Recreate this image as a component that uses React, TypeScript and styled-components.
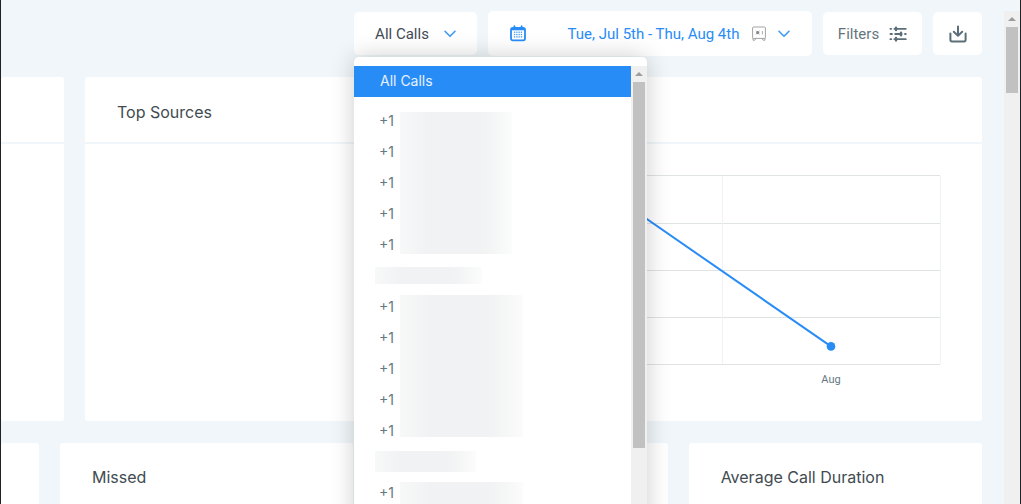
import React from "react";
import styled, { createGlobalStyle } from "styled-components";

const GlobalStyle = createGlobalStyle`
  *, *::before, *::after { box-sizing: border-box; }
  body { margin: 0; background: #f0f6f9; }
  button { font: inherit; cursor: pointer; }
`;

const Page = styled.div`
  display: flex;
  height: 100vh;
  overflow: hidden;
  border-left: 1px solid #1f2326;
  border-right: 1px solid #1f2326;
  background: #f0f6f9;
  font-family: Roboto, "Liberation Sans", sans-serif;
  color: #414b50;
`;

const Content = styled.main`
  flex: 1;
  min-width: 0;
  padding-right: 22px;
`;

const Toolbar = styled.header`
  display: flex;
  justify-content: flex-end;
  align-items: center;
  gap: 11px;
  padding: 11px 0 21px;
`;

const SelectWrap = styled.div`
  position: relative;
`;

const ToolButton = styled.button<{ $width: number; $gap?: number; $tall?: boolean; $color?: string }>`
  display: flex;
  align-items: center;
  justify-content: center;
  gap: ${(p) => p.$gap ?? 12}px;
  width: ${(p) => p.$width}px;
  height: ${(p) => (p.$tall ? 45 : 43)}px;
  padding: 0;
  border: 0;
  border-radius: 5px;
  background: #fff;
  color: ${(p) => p.$color ?? "#66757d"};
  font-size: 15px;
  line-height: 20px;
  white-space: nowrap;
`;

const DateText = styled.span`
  margin: 0 1px 0 30px;
`;

const Menu = styled.div`
  position: absolute;
  top: 45px;
  left: 0;
  z-index: 2;
  width: 293px;
  padding-top: 9px;
  border-radius: 5px;
  background: #fff;
  box-shadow: 0 0 24px rgba(0, 0, 0, 0.2);
`;

const MenuBody = styled.div`
  display: flex;
  min-height: 460px;
`;

const MenuList = styled.div`
  flex: 1;
  font-family: Inter, Roboto, sans-serif;
  font-size: 14px;
  line-height: 31px;
  color: #66777f;
`;

const SelectedOption = styled.div`
  height: 31px;
  padding-left: 26px;
  margin-bottom: 8px;
  background: #288cf7;
  color: #e6f2ff;
  line-height: 30px;
`;

const NumberGroup = styled.div`
  display: flex;
  gap: 6px;
  padding-left: 25px;
`;

const Prefixes = styled.div`
  width: 15px;
`;

const Redacted = styled.div<{ $width: number; $height: number }>`
  width: ${(p) => p.$width}px;
  height: ${(p) => p.$height}px;
  background: linear-gradient(90deg, #f7f8f8, #f1f2f3 25%, #f0f2f3 70%, #f5f6f6 85%, #fbfcfb);
`;

const NumberMask = styled(Redacted)<{ $top: number }>`
  margin-top: ${(p) => p.$top}px;
`;

const GroupTitle = styled.div`
  display: flex;
  align-items: center;
  height: 31px;
  padding-left: 21px;
`;

const ScrollTrack = styled.div<{ $width: number }>`
  flex: none;
  width: ${(p) => p.$width}px;
  padding: 0 2px;
  background: #f0f0f0;
`;

const ScrollArrow = styled.div`
  display: flex;
  justify-content: center;
  align-items: center;
  height: 16px;

  &::before {
    content: "";
    border: 4px solid transparent;
    border-top-width: 0;
    border-bottom-color: #9c9c9c;
  }
`;

const ScrollThumb = styled.div<{ $height: number }>`
  height: ${(p) => p.$height}px;
  background: #c1c1c1;
`;

const PageScroll = styled(ScrollTrack)`
  margin-top: 11px;
`;

const Row = styled.section<{ $first: string; $count: number }>`
  display: grid;
  grid-template-columns: ${(p) => p.$first} repeat(${(p) => p.$count}, 1fr);
  gap: 21px;
  margin-bottom: 22px;
`;

const Card = styled.article<{ $height: number }>`
  height: ${(p) => p.$height}px;
  border-radius: 3px;
  background: #fff;
`;

const CardHeader = styled.h2<{ $ruled?: boolean }>`
  height: 67px;
  margin: 0;
  padding: ${(p) => (p.$ruled ? 24 : 23)}px 32px 0;
  border-bottom: ${(p) => (p.$ruled ? "2px solid #f0f6f9" : "0")};
  font-family: Inter, Roboto, sans-serif;
  font-size: 16px;
  font-weight: 400;
  line-height: 22px;
`;

const ChartWrap = styled.div`
  display: flex;
  justify-content: flex-end;
`;

const Chevron = () => (
  <svg width="12" height="8" viewBox="0 0 12 8" fill="none" stroke="#3d9afa" strokeWidth="1.6" strokeLinecap="round" strokeLinejoin="round" aria-hidden="true">
    <path d="M1 1.3 6 6.3 11 1.3" />
  </svg>
);

const CalendarIcon = () => (
  <svg width="16" height="17" viewBox="0 0 16 17" fill="none" aria-hidden="true">
    <rect x="1" y="3" width="14" height="12.4" rx="1.8" stroke="#288cf7" strokeWidth="1.8" />
    <path d="M1 4.4h14" stroke="#288cf7" strokeWidth="1.8" />
    <path d="M4.4 1.2v3M11.6 1.2v3" stroke="#288cf7" strokeWidth="1.8" strokeLinecap="round" />
    <g fill="#288cf7" opacity=".85">
      {[7.2, 9.5, 11.8].map((y) => [3.9, 6.2, 8.5, 10.8].map((x) => (
        <rect key={`${x}-${y}`} x={x} y={y - 0.6} width="1.3" height="1.3" />
      )))}
    </g>
  </svg>
);

const SafeIcon = () => (
  <svg width="14" height="15" viewBox="0 0 14 15" fill="none" stroke="#a3a3a3" aria-hidden="true">
    <rect x=".6" y="1" width="12.8" height="11.4" rx="1" />
    <path d="M1 12v2.2h1.8l1.2-1.6M13 12v2.2h-1.8L10 12.6" />
    <path d="M10.4 5v3.4" strokeWidth=".9" />
    <circle cx="5.7" cy="6.6" r="1.6" fill="#808080" stroke="none" />
    <path d="M3.6 4.6 7.8 8.6M7.8 4.6 3.6 8.6" stroke="#999" strokeWidth=".6" />
  </svg>
);

const FiltersIcon = () => (
  <svg width="18" height="16" viewBox="0 0 18 16" fill="none" stroke="#5c6f79" strokeWidth="1.8" strokeLinecap="round" aria-hidden="true">
    <path d="M1.4 2.8h.8M5.4 2.8h11.4M1.4 8H3M6.2 8h6.4M16 8h.8M1.4 13.2h.8M5.4 13.2h11.4" />
    <path d="M7 1.6v2.4M12 6.8v2.4M7 12v2.4" strokeWidth="2.4" />
  </svg>
);

const DownloadIcon = () => (
  <svg width="18" height="18" viewBox="0 0 18 18" fill="none" stroke="#5c6f79" strokeWidth="2" strokeLinecap="round" strokeLinejoin="round" aria-hidden="true">
    <path d="M9 1.4v9.2M4.8 6.8 9 10.8l4.2-4" />
    <path d="M1.4 8.6v6.2q0 1.6 1.6 1.6h12q1.6 0 1.6-1.6V8.6" />
  </svg>
);

const TrendChart = () => (
  <svg width="438" height="270" viewBox="544 144 438 270" role="img" aria-label="Calls by month">
    <g stroke="#dfe3e4" shapeRendering="crispEdges">
      {[175, 223, 270, 317, 364].map((y) => (
        <path key={y} d={`M588 ${y + 0.5}H940`} />
      ))}
    </g>
    <path d="M722.5 176V364M940.5 176V364" stroke="#f1f2f3" shapeRendering="crispEdges" />
    <path d="M614 196.3 831 346.4" stroke="#288cf7" strokeWidth="2" />
    <circle cx="831" cy="346.4" r="4.3" fill="#288cf7" />
    <text x="831" y="383" textAnchor="middle" fontSize="11" fill="#66777f">Aug</text>
  </svg>
);

const groups = [
  { title: 0, titleHeight: 0, rows: 5, width: 112, top: 7, height: 142 },
  { title: 107, titleHeight: 17, rows: 5, width: 123, top: 4, height: 142 },
  { title: 101, titleHeight: 21, rows: 1, width: 123, top: 5, height: 26 },
];

export default function App() {
  return (
    <>
      <GlobalStyle />
      <Page>
        <Content>
          <Toolbar>
            <SelectWrap>
              <ToolButton type="button" $width={123} $gap={15} $color="#414b56" aria-haspopup="listbox" aria-expanded="true">
                All Calls
                <Chevron />
              </ToolButton>
              <Menu>
                <MenuBody>
                  <MenuList role="listbox" aria-label="Calls">
                    <SelectedOption role="option" aria-selected="true">All Calls</SelectedOption>
                    {groups.map((g, i) => (
                      <React.Fragment key={i}>
                        {g.title > 0 && (
                          <GroupTitle>
                            <Redacted $width={g.title} $height={g.titleHeight} />
                          </GroupTitle>
                        )}
                        <NumberGroup>
                          <Prefixes>
                            {Array.from({ length: g.rows }, (_, n) => (
                              <div key={n} role="option" aria-selected="false">+1</div>
                            ))}
                          </Prefixes>
                          <NumberMask $width={g.width} $height={g.height} $top={g.top} />
                        </NumberGroup>
                      </React.Fragment>
                    ))}
                  </MenuList>
                  <ScrollTrack $width={16}>
                    <ScrollArrow />
                    <ScrollThumb $height={366} />
                  </ScrollTrack>
                </MenuBody>
              </Menu>
            </SelectWrap>
            <ToolButton type="button" $width={324} $tall $color="#288cf7">
              <CalendarIcon />
              <DateText>Tue, Jul 5th - Thu, Aug 4th</DateText>
              <SafeIcon />
              <Chevron />
            </ToolButton>
            <ToolButton type="button" $width={99} $gap={10}>
              Filters
              <FiltersIcon />
            </ToolButton>
            <ToolButton type="button" $width={49} aria-label="Download">
              <DownloadIcon />
            </ToolButton>
          </Toolbar>

          <Row $first="63px" $count={2}>
            <Card $height={344}>
              <CardHeader $ruled />
            </Card>
            <Card $height={344}>
              <CardHeader $ruled>Top Sources</CardHeader>
            </Card>
            <Card $height={344}>
              <CardHeader $ruled />
              <ChartWrap>
                <TrendChart />
              </ChartWrap>
            </Card>
          </Row>

          <Row $first="38px" $count={3}>
            <Card $height={200} />
            <Card $height={200}>
              <CardHeader>Missed</CardHeader>
            </Card>
            <Card $height={200} />
            <Card $height={200}>
              <CardHeader>Average Call Duration</CardHeader>
            </Card>
          </Row>
        </Content>
        <PageScroll $width={16}>
          <ScrollArrow />
          <ScrollThumb $height={66} />
        </PageScroll>
      </Page>
    </>
  );
}
